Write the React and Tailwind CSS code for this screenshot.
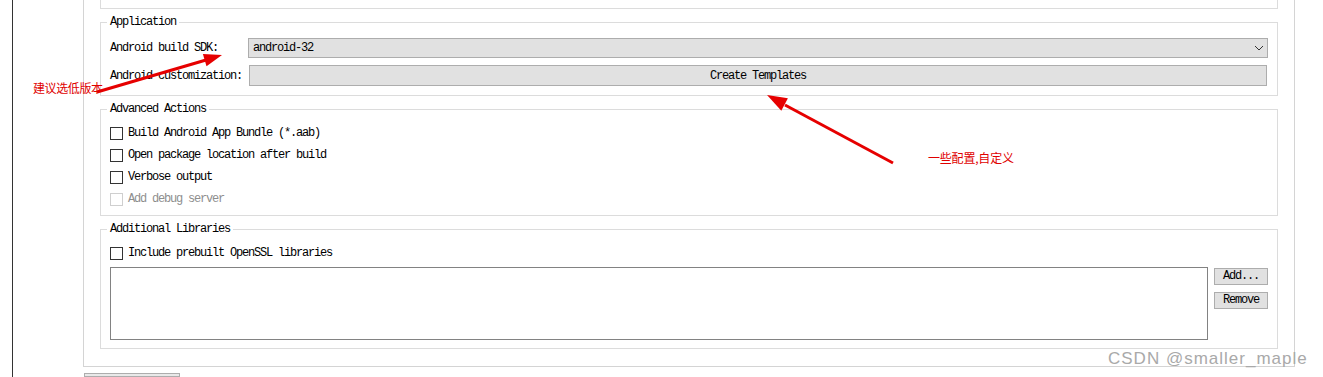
import React from "react";

const Group = ({ title, className, children }) => {
  return (
    <fieldset className={"border border-[#dcdcdc] px-[9px] " + className}>
      <legend className="-ml-[3px] px-[3px] leading-[12px]">{title}</legend>
      {children}
    </fieldset>
  );
};

const Check = ({ label, disabled }) => {
  return (
    <div className="flex h-[22px] items-center">
      <span
        className={
          disabled
            ? "h-[13px] w-[13px] border border-[#cfcfcf] bg-white"
            : "h-[13px] w-[13px] border border-[#333333] bg-white"
        }
      />
      <span className={disabled ? "ml-[5px] text-[#8e8e8e]" : "ml-[5px]"}>{label}</span>
    </div>
  );
};

const App = () => {
  return (
    <div className="relative flex h-[377px] w-[1323px] overflow-hidden bg-white font-[family-name:'Liberation_Mono','Courier_New',monospace] text-[12px] leading-[12px] tracking-[-1.2px] text-black">
      <div className="w-[12px]" />
      <div className="w-px bg-[#333333]" />
      <div className="w-[70px]" />

      <div className="flex w-[1212px] flex-col">
        <div className="border-x border-b border-[#d4d4d4] px-4 pb-[17px]">
          <div className="h-[9px] border-x border-b border-[#dcdcdc]" />

          <Group title="Application" className="mt-[7px] pt-[10px] pb-[9px]">
            <div className="flex h-[20px] items-center">
              <span className="w-[138px]">Android build SDK:</span>
              <div className="flex h-[20px] flex-1 items-center justify-between border border-[#adadad] bg-[#e1e1e1] pl-[4px] pr-[3px]">
                <span>android-32</span>
                <svg width="10" height="6" viewBox="0 0 10 6">
                  <polyline points="1,1 5,5 9,1" fill="none" stroke="#333" strokeWidth="1" />
                </svg>
              </div>
            </div>
            <div className="mt-[7px] flex h-[21px] items-center">
              <span className="w-[139px]">Android customization:</span>
              <button className="mr-px flex h-[21px] flex-1 items-center justify-center border border-[#adadad] bg-[#e1e1e1]">
                Create Templates
              </button>
            </div>
          </Group>

          <Group title="Advanced Actions" className="mt-[7px] pt-[7px] pb-[5px]">
            <Check label="Build Android App Bundle (*.aab)" />
            <Check label="Open package location after build" />
            <Check label="Verbose output" />
            <Check label="Add debug server" disabled />
          </Group>

          <Group title="Additional Libraries" className="mt-[7px] pt-[7px] pb-[8px]">
            <Check label="Include prebuilt OpenSSL libraries" />
            <div className="mt-[3px] flex gap-[6px]">
              <div className="h-[73px] flex-1 border border-[#828282] bg-white" />
              <div className="mt-px flex w-[54px] flex-col gap-[7px]">
                <button className="h-[17px] border border-[#adadad] bg-[#e1e1e1] leading-[15px]">Add...</button>
                <button className="h-[17px] border border-[#adadad] bg-[#e1e1e1] leading-[15px]">Remove</button>
              </div>
            </div>
          </Group>
        </div>
        <div className="ml-px mt-[6px] h-[12px] w-[96px] border border-[#adadad] bg-[#e9e9e9]" />
      </div>

      {/* annotations */}
      <svg className="pointer-events-none absolute left-0 top-0" width="1323" height="377">
        <line x1="97" y1="92" x2="206" y2="60" stroke="#e60000" strokeWidth="3" />
        <polygon points="222,55 206.5,66.3 202.9,53.9" fill="#e60000" />
        <line x1="893" y1="163" x2="785" y2="105" stroke="#e60000" strokeWidth="3" />
        <polygon points="767,95 787.9,98.3 781.3,110.7" fill="#e60000" />
      </svg>
      <span className="absolute left-[33px] top-[81px] font-[family-name:'Noto_Sans_CJK_SC',sans-serif] text-[12px] leading-[14px] tracking-[-0.4px] text-[#e00000]">
        建议选低版本
      </span>
      <span className="absolute left-[928px] top-[151px] font-[family-name:'Noto_Sans_CJK_SC',sans-serif] text-[12px] leading-[14px] tracking-[-0.2px] text-[#e00000]">
        一些配置,自定义
      </span>
      <span className="absolute left-[1108px] top-[349px] font-[family-name:'Liberation_Sans',sans-serif] text-[17px] leading-[20px] tracking-[1px] text-[#a9a9a9]">
        CSDN @smaller_maple
      </span>
    </div>
  );
};

export default App;
